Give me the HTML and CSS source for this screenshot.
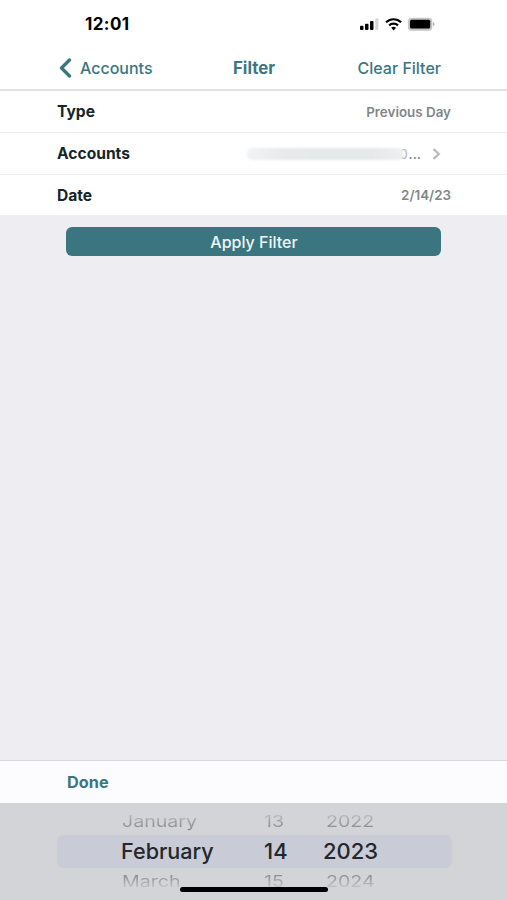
FILE: index.html
```html
<!DOCTYPE html>
<html lang="en">
<head>
    <meta charset="UTF-8">
    <meta name="viewport" content="width=device-width, initial-scale=1.0">
    <title>Filter</title>
    <link rel="stylesheet" href="styles.css">
</head>
<body>

    <div class="screen">
        <div class="status-bar">
            <span class="time">12:01</span>
            <svg class="status-icons" width="76" height="16" viewBox="0 0 76 16">
                <rect x="1" y="9.8" width="3.5" height="4.2" rx="1"/>
                <rect x="6" y="7.7" width="3.5" height="6.3" rx="1"/>
                <rect x="11" y="5" width="3.5" height="9" rx="1"/>
                <rect x="16.2" y="2.2" width="3.2" height="11.8" rx="1" fill="#d6d6d6"/>
                <g fill="none" stroke="#000" stroke-width="2.2">
                    <path d="M27.1 6.3a10.8 10.8 0 0 1 15 0"/>
                    <path d="M30.2 9.4a6.4 6.4 0 0 1 8.8 0"/>
                </g>
                <path d="M34.6 14.4l-2.4-2.6a3.6 3.6 0 0 1 4.8 0z"/>
                <rect x="48.9" y="1.7" width="24.4" height="13" rx="4" fill="#c4c4c4"/>
                <rect x="51" y="3.8" width="20.2" height="8.8" rx="1.5"/>
                <path d="M73.9 6.1v4.2q1.6-.6 1.6-2.1t-1.6-2.1z" fill="#b4b4b4"/>
            </svg>
        </div>

        <div class="nav-bar">
            <div class="nav-back">
                <svg width="14" height="20" viewBox="0 0 14 20">
                    <path d="M11.5 2L3.5 10l8 8" fill="none" stroke="#3b7680" stroke-width="3.2" stroke-linecap="round" stroke-linejoin="round"/>
                </svg>
                <span class="back-text">Accounts</span>
            </div>
            <span class="nav-title">Filter</span>
            <div class="nav-clear"><span class="clear-text">Clear Filter</span></div>
        </div>

        <div class="filter-list">
            <div class="row">
                <span class="label">Type</span>
                <span class="value">Previous Day</span>
            </div>
            <div class="row">
                <span class="label">Accounts</span>
                <div class="account-value">
                    <span class="masked-end">0</span>
                    <span class="masked"></span>
                    <span class="dots">...</span>
                    <svg class="chevron" width="9" height="14" viewBox="0 0 9 14">
                        <path d="M1.5 2l5.3 5-5.3 5" fill="none" stroke="#b9bbbc" stroke-width="2.4"/>
                    </svg>
                </div>
            </div>
            <div class="row">
                <span class="label">Date</span>
                <span class="value">2/14/23</span>
            </div>
        </div>

        <div class="content">
            <button class="apply-button">Apply Filter</button>
        </div>

        <div class="toolbar">
            <span class="done">Done</span>
        </div>

        <div class="picker">
            <div class="picker-row prev">
                <span class="month">January</span>
                <span class="day">13</span>
                <span class="year">2022</span>
            </div>
            <div class="picker-row selected">
                <span class="month">February</span>
                <span class="day">14</span>
                <span class="year">2023</span>
            </div>
            <div class="picker-row next">
                <span class="month">March</span>
                <span class="day">15</span>
                <span class="year">2024</span>
            </div>
            <div class="home-indicator"></div>
        </div>
    </div>

</body>
</html>
```

FILE: styles.css
```css
body {
    font-family: Inter, "Liberation Sans", sans-serif;
    margin: 0;
    background-color: #eeedf2;
}

.screen {
    display: flex;
    flex-direction: column;
    height: 900px;
    overflow: hidden;
}

.status-bar {
    display: flex;
    justify-content: space-between;
    align-items: center;
    box-sizing: border-box;
    height: 48px;
    padding: 0 72px 0 85px;
    background-color: #fff;
}

.time {
    font-size: 17px;
    font-weight: 700;
    letter-spacing: 0.4px;
    color: #000;
}

.nav-bar {
    display: grid;
    grid-template-columns: 1fr auto 1fr;
    align-items: center;
    box-sizing: border-box;
    height: 43px;
    padding: 0 66px 2px 58px;
    background-color: #fff;
    border-bottom: 2px solid #e1e2e2;
    color: #3b7680;
    font-size: 16px;
    font-weight: 500;
}

.nav-back {
    display: flex;
    align-items: center;
    gap: 8px;
}

.nav-title {
    padding-left: 9px;
    font-size: 16.8px;
    font-weight: 700;
}

.nav-clear {
    text-align: right;
}

.filter-list {
    background-color: #fff;
}

.row {
    display: flex;
    justify-content: space-between;
    align-items: center;
    height: 41px;
    padding: 0 56px 0 57px;
    border-bottom: 1px solid #ebedee;
}

.row:last-child {
    height: 40px;
    border-bottom: none;
}

.label {
    font-size: 15.6px;
    font-weight: 700;
    color: #142629;
}

.value {
    font-size: 13.4px;
    font-weight: 600;
    color: #818788;
}

.account-value {
    display: flex;
    align-items: center;
    padding-right: 10px;
    color: #858b8c;
    font-size: 13px;
    font-weight: 600;
}

.masked {
    position: relative;
    z-index: 1;
    width: 157px;
    height: 12px;
    margin-right: 5px;
    border-radius: 5px;
    background: linear-gradient(to right, #f1f3f4, #e7eaeb 25%, #e6e9ea 80%, #eef0f1);
    filter: blur(1px);
}

/* last digit stays half visible behind the smudge */
.masked-end {
    order: 1;
    width: 9px;
    margin-left: -9px;
    font-weight: 400;
    color: #a9afb0;
}

.dots,
.chevron {
    order: 2;
}

.chevron {
    margin-left: 11px;
}

.content {
    flex: 1;
    padding: 12px 66px 0;
}

.apply-button {
    display: block;
    width: 375px;
    height: 29px;
    padding: 0 0 0 1px;
    border: none;
    border-radius: 6px;
    background-color: #3b7680;
    color: #eef6f7;
    font-family: inherit;
    font-size: 16px;
    font-weight: 500;
}

.toolbar {
    display: flex;
    align-items: center;
    box-sizing: border-box;
    height: 43px;
    padding: 0 0 1px 67px;
    background-color: #fcfcfe;
    border-top: 1px solid #d9d9dd;
}

.done {
    color: #3b7680;
    font-size: 16.3px;
    font-weight: 700;
}

.picker {
    position: relative;
    height: 97px;
    background-color: #d2d4d8;
}

.picker-row {
    display: grid;
    grid-template-columns: 143px 59px 1fr;
    align-items: center;
    box-sizing: border-box;
    margin: 0 55px 0 57px;
    padding-left: 64px;
    color: #24272b;
    font-size: 22px;
    font-weight: 500;
}

.prev,
.next {
    height: 32px;
    grid-template-columns: 142px 62px 1fr;
    font-size: 19.6px;
    font-weight: 400;
    transform: scaleY(0.8);
    -webkit-background-clip: text;
    background-clip: text;
    color: transparent;
}

.prev {
    padding-top: 6px;
    padding-left: 65px;
    background-image: linear-gradient(to bottom, #b8babe 35%, #85888d 90%);
}

.next {
    padding-bottom: 6px;
    padding-left: 65px;
    background-image: linear-gradient(to bottom, #85888d 10%, #d2d4d8 80%);
}

.selected {
    height: 33px;
    padding-bottom: 1px;
    border-radius: 6px;
    background-color: #c9ccd6;
}

.selected .month {
    font-size: 21.6px;
}

.home-indicator {
    position: absolute;
    left: 180px;
    bottom: 8px;
    width: 148px;
    height: 5px;
    border-radius: 3px;
    background-color: #000;
}
```
